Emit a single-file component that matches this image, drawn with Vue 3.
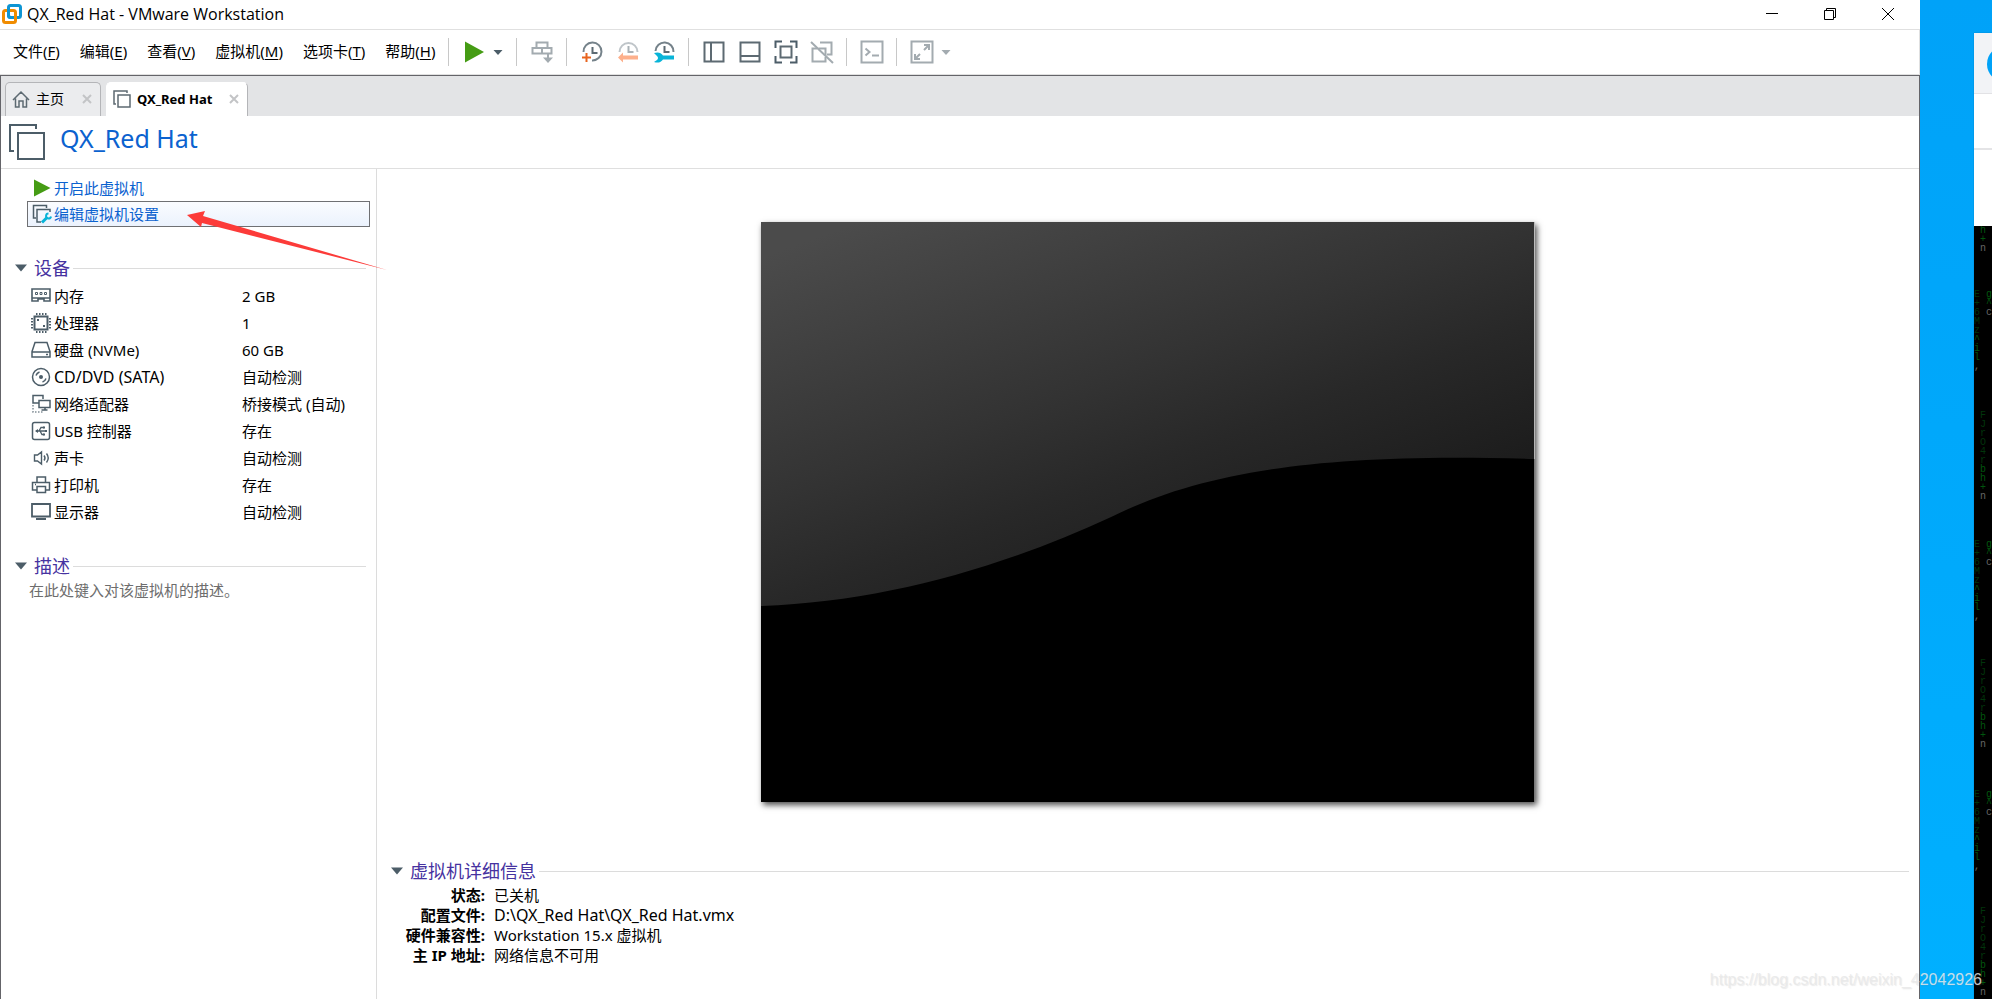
<script setup>
const menus = [
  { label: '文件', key: 'F' },
  { label: '编辑', key: 'E' },
  { label: '查看', key: 'V' },
  { label: '虚拟机', key: 'M' },
  { label: '选项卡', key: 'T' },
  { label: '帮助', key: 'H' },
]

const toolGroups = [
  [
    {
      name: '发送 Ctrl+Alt+Del',
      art: '<path d="M6.500 2.500h11v5.500h-11zM2.500 8h9.500v5.500H2.500zM12 8h9.500v5.500H12z" stroke="#a3abb0" stroke-width="2"/><path d="M18 14v5" stroke="#a3abb0" stroke-width="2"/><path d="M13 17.500h10L18 23z" fill="#a3abb0"/>',
    },
  ],
  [
    {
      name: '拍摄快照',
      art: '<path d="M3.500 12A9 9 0 1 1 12 20.500" stroke="#75828a" stroke-width="2"/><path d="M12.500 7v6h5" stroke="#5c6a73" stroke-width="2"/><path d="M6.500 13v9M2 17.500h9" stroke="#e8641f" stroke-width="2"/>',
    },
    {
      name: '恢复快照',
      art: '<path d="M3.500 12a9 9 0 1 1 18 0" stroke="#bfc5c9" stroke-width="2"/><path d="M12.500 6v6h5" stroke="#a9b1b6" stroke-width="2"/><path d="M2 17.500l5-5v3h15v4H7v3z" fill="#fdb08c"/>',
    },
    {
      name: '管理快照',
      art: '<path d="M3.500 11a9 9 0 1 1 18 1" stroke="#75828a" stroke-width="2"/><path d="M12.500 6v6h5" stroke="#5c6a73" stroke-width="2"/><path d="M2 13q6-2 9 2.500h11v4H11q-3 4.500-9 2.500l3-2q2-2 0-4z" fill="#08b4d8"/>',
    },
  ],
  [
    { name: '显示库', art: '<path d="M2.500 2.500h19v19h-19zM9 2.500v19" stroke="#5d6a72" stroke-width="2"/>' },
    { name: '显示缩略图栏', art: '<path d="M2.500 2.500h19v19h-19zM2.500 16h19" stroke="#5d6a72" stroke-width="2"/>' },
    { name: '全屏', art: '<path d="M1.500 8V1.500H8M16 1.500h6.500V8M22.500 16v6.500H16M8 22.500H1.500V16" stroke="#4c5d68" stroke-width="2"/><path d="M6.500 6.500h11v11h-11z" stroke="#5d6a72" stroke-width="2"/>' },
    { name: 'Unity', art: '<path d="M10 2.500h11.500v12H17M7 8.500H2.500v13h13V17M8.500 8.500h7v7" stroke="#a3abb0" stroke-width="2"/><path d="M1 2l22 21" stroke="#a3abb0" stroke-width="2"/>' },
  ],
  [{ name: '控制台视图', art: '<path d="M1.500 1.500h21v21h-21z" stroke="#a3abb0" stroke-width="2"/><path d="M5.500 8.500l4 3.500-4 3.500M12 15.500h7" stroke="#a3abb0" stroke-width="2"/>' }],
]

const devices = [
  { name: '内存', value: '2 GB', art: '<path d="M1 3h18v12h-6v-2H7v2H1zM1 12h18" stroke-width="1.600"/><path d="M4.500 6.500h2v2h-2zM9 6.500h2v2H9zM13.500 6.500h2v2h-2z" stroke-width="1"/>' },
  { name: '处理器', value: '1', art: '<path d="M3.500 3.500h13v13h-13z" stroke-width="2"/><path d="M5 1h11M5 19h11M1 5v11M19 5v11" stroke-width="2" stroke-dasharray="1.500 1.500"/><path d="M6 6h2v2H6zM12 12h2v2h-2z" fill="#4c5d68" stroke="none"/>' },
  { name: '硬盘 (NVMe)', value: '60 GB', art: '<path d="M4 2.500h12l3 9v5.500H1v-5.500zM1 12h18M15 14.500h2"/>' },
  { name: 'CD/DVD (SATA)', latin: true, value: '自动检测', art: '<circle cx="10" cy="10" r="8.500"/><circle cx="10" cy="10" r="2" fill="#4c5d68" stroke="none"/><path d="M5 8.500a5.500 5.500 0 0 1 3.500-3.500M15 11.500a5.500 5.500 0 0 1-3.500 3.500"/>' },
  { name: '网络适配器', value: '桥接模式 (自动)', art: '<path d="M8 9H2V1.500h10V5M8 6.500h11v7H8zM14 13.500V16M10.500 16h6"/><path d="M2 11v7h11" stroke-dasharray="1.500 1.500" opacity=".7"/>' },
  { name: 'USB 控制器', value: '存在', art: '<rect x="1.500" y="1.500" width="17" height="17" rx="2"/><path d="M5 10h10M8 10l2-3.500h3M9 10l2 3.500h2" stroke-width="1.300"/><path d="M4 10l3-2v4zM12 5.500h2v2h-2zM12 12.500h2v2h-2zM14 9h2v2h-2z" fill="#4c5d68" stroke="none"/>' },
  { name: '声卡', value: '自动检测', art: '<path d="M3.500 7h3L10.500 4v12L6.500 13h-3zM13 7.500q2 2.500 0 5M15.500 5.500q3.500 4.500 0 9" stroke-width="1.400"/>' },
  { name: '打印机', value: '存在', art: '<path d="M6 7V2h8.500v5M5.500 15h-4V7.500h17V15h-4M6 11.500h8.500V17.500H6zM4 9.500h1"/>' },
  { name: '显示器', value: '自动检测', art: '<path d="M1 2h18v12.500H1z" stroke-width="1.800"/><path d="M5 17h10" stroke-width="2"/>' },
]

const details = [
  { term: '状态:', text: '已关机' },
  { term: '配置文件:', text: 'D:\\QX_Red Hat\\QX_Red Hat.vmx', latin: true },
  { term: '硬件兼容性:', text: 'Workstation 15.x 虚拟机' },
  { term: '主 IP 地址:', text: '网络信息不可用' },
]

const outer = 'E+6Mz^il,'
const middle = 'FJrO4rbh+n'
const rain = [
  { kind: 'outer', runs: [outer, outer, outer] },
  { kind: 'middle', runs: ['h+n', middle, middle, middle] },
  { kind: 'outer', runs: ['g^c', 'g^c', 'g^c'] },
]
const glow = (run, i) => {
  if (i === run.length - 1) return 'tail'
  return run.length - i <= 4 ? 'bright' : 'dim'
}
</script>

<template>
  <div class="desktop">
    <div class="window">
      <header class="titlebar">
        <svg class="logo" viewBox="0 0 20 20" aria-hidden="true">
          <rect x="6.500" y="1.500" width="12" height="12" rx="2" fill="none" stroke="#0e95d3" stroke-width="3" />
          <rect x="1.500" y="6.500" width="12" height="12" rx="2" fill="none" stroke="#f08c00" stroke-width="3" />
          <path d="M6.500 5v6q0 2.500 2.500 2.500h3" fill="none" stroke="#0e95d3" stroke-width="3" />
        </svg>
        <span class="caption">QX_Red Hat - VMware Workstation</span>
        <div class="controls">
          <button type="button" aria-label="最小化"><svg viewBox="0 0 12 12"><path d="M0 5.500h12" /></svg></button>
          <button type="button" aria-label="还原"><svg viewBox="0 0 12 12"><path d="M.5 2.500h9v9h-9zM2.500 2.500v-2h9v9h-2" /></svg></button>
          <button type="button" aria-label="关闭"><svg viewBox="0 0 12 12"><path d="M0 0l12 12M12 0L0 12" /></svg></button>
        </div>
      </header>

      <div class="menubar">
        <nav class="menus">
          <button v-for="m in menus" :key="m.key" type="button">{{ m.label }}(<u>{{ m.key }}</u>)</button>
        </nav>
        <div class="tools">
          <i class="sep"></i>
          <div class="pair">
            <button type="button" class="tool" aria-label="开启"><svg viewBox="0 0 24 24"><path d="M3 1.500v21L22 12z" fill="#459c14" /></svg></button>
            <button type="button" class="drop" aria-label="电源选项"><svg viewBox="0 0 12 24"><path d="M1.500 10h9L6 15z" fill="#4c5d68" /></svg></button>
          </div>
          <template v-for="(group, g) in toolGroups" :key="g">
            <i class="sep"></i>
            <button v-for="t in group" :key="t.name" type="button" class="tool" :aria-label="t.name">
              <svg viewBox="0 0 24 24" fill="none" v-html="t.art"></svg>
            </button>
          </template>
          <i class="sep"></i>
          <div class="pair">
            <button type="button" class="tool" aria-label="自由拉伸">
              <svg viewBox="0 0 24 24" fill="none" stroke="#a3abb0" stroke-width="2">
                <path d="M1.500 1.500h21v21h-21z" />
                <path d="M14 5h5v5M5 14v5h5M19 5l-5 5M5 19l5-5" />
              </svg>
            </button>
            <button type="button" class="drop" aria-label="拉伸选项"><svg viewBox="0 0 12 24"><path d="M1.500 10h9L6 15z" fill="#a3abb0" /></svg></button>
          </div>
        </div>
      </div>

      <div class="body">
        <div class="tabs">
          <div class="tab home">
            <button type="button" class="tab-name">
              <svg viewBox="0 0 18 18" fill="none" stroke="#5d6a72" stroke-width="1.500"><path d="M1 10l8-8 8 8M3.500 8.500V17H7v-6h4v6h3.500V8.500" /></svg>
              <span>主页</span>
            </button>
            <button type="button" class="close" aria-label="关闭 主页"><svg viewBox="0 0 10 10"><path d="M1 1l8 8M9 1L1 9" /></svg></button>
          </div>
          <div class="tab active">
            <button type="button" class="tab-name">
              <svg viewBox="0 0 18 18" fill="none" stroke="#5d6a72" stroke-width="1.500"><path d="M3 14H1V1h13v2M5 5h12v12H5z" /></svg>
              <span>QX_Red Hat</span>
            </button>
            <button type="button" class="close" aria-label="关闭 QX_Red Hat"><svg viewBox="0 0 10 10"><path d="M1 1l8 8M9 1L1 9" /></svg></button>
          </div>
        </div>

        <div class="heading">
          <svg viewBox="0 0 36 36" fill="none" stroke="#4c5d68" stroke-width="2"><path d="M5 27H1V1h26v4M9 9h26v26H9z" /></svg>
          <h1>QX_Red Hat</h1>
        </div>

        <div class="columns">
          <aside class="side">
            <a href="#" class="action"><svg viewBox="0 0 20 20"><path d="M2 1.500v17L18.500 10z" fill="#459c14" /></svg>开启此虚拟机</a>
            <a href="#" class="action edit">
              <svg viewBox="0 0 20 20" fill="none" stroke="#4c5d68" stroke-width="1.500">
                <path d="M4 14H1.500V1.500h13V4M9 18H5V5.500h13V8" />
                <path d="M10 18.500l5.500-5.500" stroke="#08b4d8" stroke-width="3" />
                <path d="M16.500 9.500a2.500 2.500 0 1 0 2.500 3" stroke="#08b4d8" stroke-width="2" />
              </svg>编辑虚拟机设置
            </a>

            <section class="devices">
              <h2><svg viewBox="0 0 12 8"><path d="M0 .5h12L6 7.500z" /></svg>设备</h2>
              <dl>
                <div v-for="d in devices" :key="d.name">
                  <dt :class="{ latin: d.latin }"><svg viewBox="0 0 20 20" fill="none" stroke="#4c5d68" stroke-width="1.500" v-html="d.art"></svg>{{ d.name }}</dt>
                  <dd>{{ d.value }}</dd>
                </div>
              </dl>
            </section>

            <section class="notes">
              <h2><svg viewBox="0 0 12 8"><path d="M0 .5h12L6 7.500z" /></svg>描述</h2>
              <p>在此处键入对该虚拟机的描述。</p>
            </section>
          </aside>

          <main class="main">
            <div class="stage">
              <svg class="screen" viewBox="0 0 773 580" preserveAspectRatio="none" role="img" aria-label="虚拟机屏幕">
                <defs>
                  <linearGradient id="sheen" gradientUnits="userSpaceOnUse" x1="70" y1="10" x2="227" y2="437">
                    <stop offset="0" stop-color="#4b4b4b" />
                    <stop offset=".51" stop-color="#333" />
                    <stop offset=".72" stop-color="#282828" />
                    <stop offset="1" stop-color="#1c1c1c" />
                  </linearGradient>
                </defs>
                <rect width="773" height="580" fill="url(#sheen)" />
                <path d="M0 384C120 380 240 346 350 295C440 250 560 230 773 237V580H0Z" fill="#000" />
              </svg>
            </div>
            <section class="info">
              <h2><svg viewBox="0 0 12 8"><path d="M0 .5h12L6 7.500z" /></svg>虚拟机详细信息</h2>
              <dl>
                <template v-for="d in details" :key="d.term">
                  <dt>{{ d.term }}</dt>
                  <dd :class="{ latin: d.latin }">{{ d.text }}</dd>
                </template>
              </dl>
            </section>
          </main>
        </div>
      </div>
    </div>

    <div class="behind">
      <div class="behind-top"><i></i></div>
      <div class="behind-bar"></div>
      <div class="behind-blank"></div>
      <div class="rain">
        <div v-for="(col, c) in rain" :key="c" class="col" :class="col.kind">
          <div v-for="(run, r) in col.runs" :key="r" class="run">
            <span v-for="(ch, i) in run" :key="i" :class="glow(run, i)">{{ ch }}</span>
          </div>
        </div>
      </div>
    </div>

    <svg class="pointer" viewBox="0 0 204 64" aria-hidden="true"><path d="M0 5l18-4-2 5 184 54L15 13l-1 4z" fill="#fc3b39" /></svg>
    <span class="watermark">https://blog.csdn.net/weixin_42042926</span>
  </div>
</template>

<style>
body { margin: 0; overflow: hidden; }
</style>

<style scoped>
* { box-sizing: border-box; }
button { margin: 0; padding: 0; border: 0; background: none; font: inherit; color: inherit; }
svg { display: block; flex: none; }
.desktop {
  position: relative;
  display: flex;
  height: 100vh;
  overflow: hidden;
  background: linear-gradient(#00a2f8, #00b0ff);
  font: 15px/20px "Noto Sans", "Noto Sans CJK SC", sans-serif;
  color: #000;
}
.latin { font-size: 16px; }
.window { flex: 1; min-width: 0; display: flex; flex-direction: column; background: #fff; }
.titlebar { display: flex; align-items: center; height: 29px; padding: 0 3px 2px 2px; }
.logo { width: 20px; height: 20px; }
.caption { margin-left: 5px; font-family: "Open Sans", sans-serif; font-size: 16px; }
.controls { display: flex; margin-left: auto; }
.controls button { display: flex; align-items: center; justify-content: center; width: 58px; height: 26px; }
.controls svg { width: 12px; height: 12px; fill: none; stroke: #000; }

.menubar { display: flex; align-items: center; height: 46px; border: 1px solid #e0e0e0; border-left: 0; }
.menus { display: flex; gap: 20px; padding: 0 0 2px 13px; white-space: nowrap; }
u { text-underline-offset: 2px; }
.tools { display: flex; align-items: center; gap: 12px; margin-left: 13px; }
.pair { display: flex; gap: 6px; }
.sep { width: 1px; height: 28px; margin-right: 1px; background: #c8c8c8; }
.tool svg { width: 24px; height: 24px; }
.drop svg { width: 12px; height: 24px; }

.body { flex: 1; min-height: 0; display: flex; flex-direction: column; border: 1px solid #646469; border-bottom: 0; }
.tabs { display: flex; align-items: flex-end; gap: 5px; height: 40px; padding-left: 4px; background: #e3e4e6; }
.tab { display: flex; align-items: center; justify-content: space-between; height: 34px; border: 1px solid #b4b5b8; border-bottom: 0; border-radius: 5px 5px 0 0; padding: 0 8px 2px 6px; font-size: 14px; }
.home { width: 96px; background: #ebecee; }
.active { width: 142px; background: #fff; border-left-color: #fff; border-top-color: #fff; font: bold 13px/20px "Noto Sans", sans-serif; }
.tab-name { display: flex; align-items: center; gap: 6px; }
.tab-name svg { width: 18px; height: 18px; }
.close svg { width: 10px; height: 10px; fill: none; stroke: #c3c4c6; stroke-width: 2; }

.heading { display: flex; align-items: center; gap: 15px; height: 53px; padding-left: 8px; border-bottom: 1px solid #dfdfdf; }
.heading svg { width: 36px; height: 36px; }
h1 { margin: 0 0 8px; font-size: 25px; line-height: 36px; font-weight: 400; color: #0b62cf; }
.columns { flex: 1; min-height: 0; display: flex; }
.side { width: 376px; padding: 6px 6px 0 10px; border-right: 1px solid #dcdcdc; }
.action { display: flex; align-items: center; gap: 2px; height: 26px; margin-left: 16px; padding-left: 4px; border: 1px solid transparent; color: #0b62cf; text-decoration: none; }
.action svg { width: 20px; height: 20px; }
.edit { border-color: #6f7073; background: linear-gradient(#fafcff, #ebf2fd); }
h2 { display: flex; align-items: center; gap: 7px; margin: 0; height: 28px; font-size: 18px; font-weight: 400; color: #4632a0; }
h2::after { content: ""; flex: 1; height: 1px; margin-left: -4px; background: #dcdcdc; }
h2 svg { width: 12px; height: 8px; fill: #4c5d68; }
.side section { padding: 0 4px; }
.devices { margin-top: 27px; }
dl, dd, p { margin: 0; }
.devices dl div { display: flex; align-items: center; height: 27px; padding-left: 16px; }
.devices dt { display: flex; align-items: center; gap: 3px; width: 211px; }
.devices dt svg { width: 20px; height: 20px; }
.notes { margin-top: 27px; }
.notes p { padding-left: 14px; color: #6d6d6d; }

.main { flex: 1; min-width: 0; display: flex; flex-direction: column; }
.stage { flex: 1; min-height: 0; display: flex; justify-content: center; padding: 53px 0; }
.screen { height: 100%; aspect-ratio: 4 / 3; box-shadow: 2px 3px 6px rgba(0, 0, 0, .7); }
.info { height: 144px; padding: 2px 10px 0 14px; }
.info dl { display: grid; grid-template-columns: 94px 1fr; column-gap: 9px; }
.info dt { font-weight: 700; text-align: right; }

.behind { display: flex; flex-direction: column; width: 18px; margin: 33px 0 0 54px; overflow: hidden; background: #fff; box-shadow: 0 0 1px #0070b0; }
.behind-top { height: 61px; padding: 13px 0 0 13px; background: #f2f3f6; border-bottom: 1px solid #e2e2e5; }
.behind-top i { display: block; width: 36px; height: 36px; border-radius: 50%; background: #00a2f8; }
.behind-bar { height: 56px; border-bottom: 2px solid #e4e4e6; }
.behind-blank { height: 76px; }
.rain { flex: 1; display: flex; overflow: hidden; background: #000; font: 10px/9px "Liberation Mono", monospace; }
.col { width: 6px; flex: none; }
.run { display: flex; flex-direction: column; margin-bottom: 158px; }
.outer .run { height: 81px; margin-bottom: 169px; }
.outer { padding-top: 64px; }
.dim { color: #00340b; }
.bright { color: #00560e; }
.tail { color: #666; }

.pointer { position: absolute; left: 187px; top: 210px; width: 204px; height: 64px; }
.watermark { position: absolute; right: 10px; bottom: 9px; font: 16px/20px "Liberation Sans", sans-serif; color: rgba(232, 232, 232, .85); text-shadow: 1px 1px 1px rgba(120, 120, 120, .15); }
</style>
